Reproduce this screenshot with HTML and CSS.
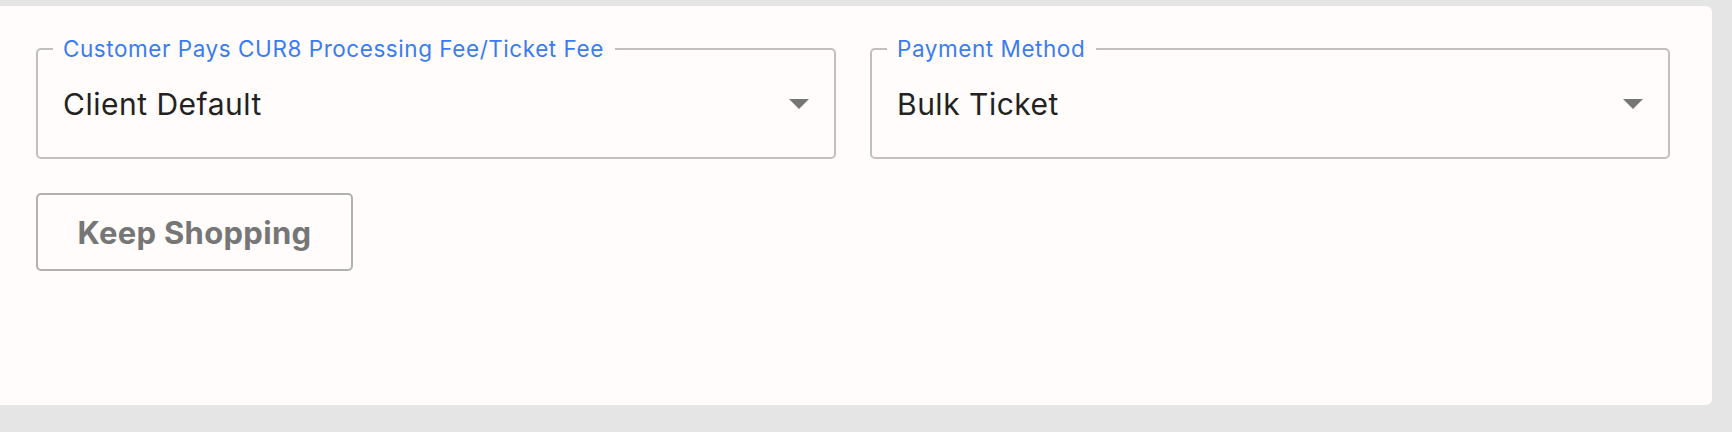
FILE: index.html
```html
<!DOCTYPE html>
<html lang="en">
<head>
<meta charset="utf-8">
<title>Checkout options</title>
<link rel="stylesheet" href="styles.css">
</head>
<body>
  <section class="card">
    <div class="fields">
      <fieldset class="field">
        <legend class="field-label">Customer Pays CUR8 Processing Fee/Ticket Fee</legend>
        <div class="field-row">
          <span class="field-value">Client Default</span>
          <span class="caret" aria-hidden="true"></span>
        </div>
      </fieldset>
      <fieldset class="field">
        <legend class="field-label">Payment Method</legend>
        <div class="field-row">
          <span class="field-value">Bulk Ticket</span>
          <span class="caret" aria-hidden="true"></span>
        </div>
      </fieldset>
    </div>
    <button class="btn-outline" type="button">Keep Shopping</button>
  </section>
</body>
</html>
```

FILE: styles.css
```css
* { box-sizing: border-box; }

html, body {
  margin: 0;
  padding: 0;
}

body {
  background: #e5e5e5;
  font-family: Inter, "DejaVu Sans", sans-serif;
  height: 432px;
  padding-top: 6px;
}

.card {
  width: 1712px;
  height: 399px;
  background: #fffcfb;
  border-radius: 0 6px 6px 0;
  padding: 32px 42px 0 36px;
}

.fields {
  display: grid;
  grid-template-columns: 1fr 1fr;
  column-gap: 34px;
}

.field {
  margin: 0;
  min-inline-size: 0;
  border: 2px solid #c0c0c0;
  border-radius: 5px;
  padding: 0 25px 9px 15px;
}

.field-label {
  font-size: 22.5px;
  line-height: 22px;
  letter-spacing: 0.55px;
  color: #3a7cf0;
  padding: 0 11px 0 10px;
  white-space: nowrap;
}

.field-row {
  height: 88px;
  display: flex;
  align-items: center;
  justify-content: space-between;
  padding-left: 10px;
}

.field-value {
  font-size: 30px;
  color: #222222;
  letter-spacing: 0.5px;
}

.caret {
  width: 0;
  height: 0;
  border-left: 10px solid transparent;
  border-right: 10px solid transparent;
  border-top: 10px solid #767676;
}

.btn-outline {
  margin-top: 34px;
  width: 317px;
  height: 78px;
  background: transparent;
  border: 2px solid #b2b2b2;
  border-radius: 5px;
  font-family: Inter, "DejaVu Sans", sans-serif;
  font-weight: 700;
  font-size: 31px;
  letter-spacing: 0.3px;
  color: #767676;
  padding: 0;
}
```
